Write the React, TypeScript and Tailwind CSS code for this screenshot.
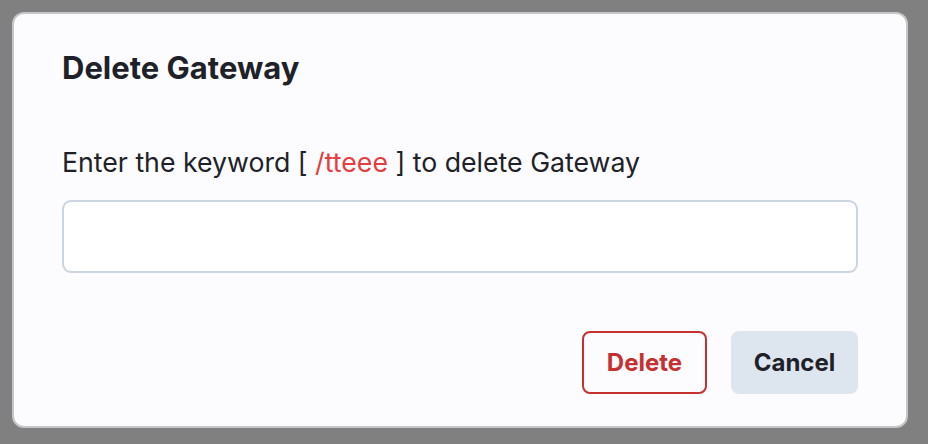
export default function App() {
  return (
    <div className="h-[444px] w-[928px] bg-[#808080] pl-[12px] pt-[12px] font-['Inter',sans-serif]">
      {/* Dialog */}
      <div className="flex h-[416px] w-[896px] flex-col rounded-[12px] border-2 border-[#c6c6c8] bg-[#fcfcfe] px-[48px] pb-[32px] pt-[35px]">
        <h2 className="text-[31px] font-bold leading-[38px] text-[#1e2228]">Delete Gateway</h2>

        <p className="mt-[59px] text-[26.7px] leading-[32px] text-[#1e2228]">
          Enter the keyword [ <span className="text-[#e53e3e]">/tteee</span> ] to delete Gateway
        </p>

        <input
          type="text"
          className="mt-[22px] h-[73px] w-full rounded-[9px] border-2 border-[#cbd5e0] bg-white px-4 text-[24px] outline-none"
        />

        <div className="mt-[58px] flex justify-end gap-[24px]">
          <button className="h-[63px] w-[125px] rounded-[8px] border-2 border-[#c53030] bg-transparent text-[24px] font-bold text-[#c53030]">
            Delete
          </button>
          <button className="h-[63px] w-[127px] rounded-[8px] bg-[#dde5ee] text-[24px] font-bold text-[#1e2228]">
            Cancel
          </button>
        </div>
      </div>
    </div>
  );
}
